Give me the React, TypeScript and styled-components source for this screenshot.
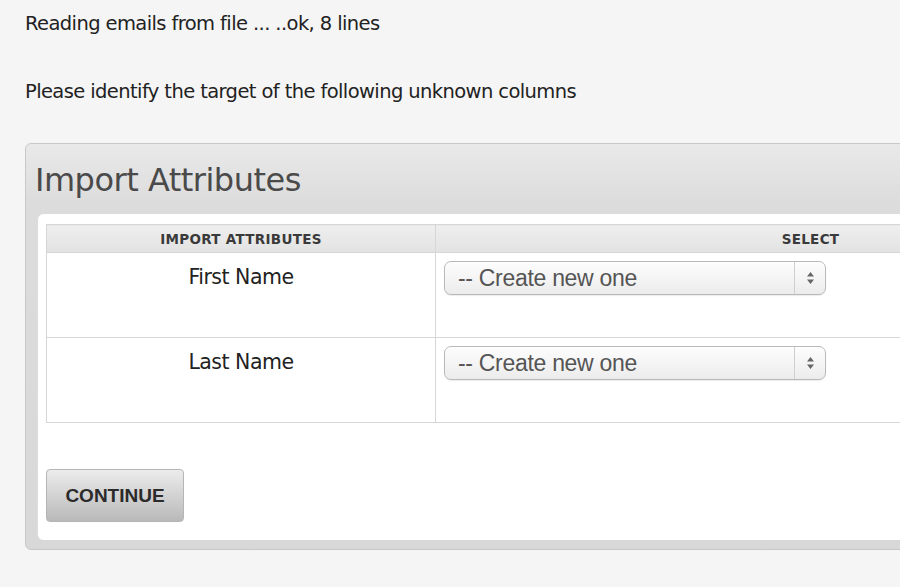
import React from "react";
import styled, { createGlobalStyle } from "styled-components";

const Global = createGlobalStyle`
  html, body { margin: 0; padding: 0; background: #f5f5f5; overflow: hidden; }
  body { font-family: "DejaVu Sans", Verdana, sans-serif; color: #222; width: 900px; height: 587px; }
`;

const Page = styled.div`
  padding: 12px 0 0 25px;
  width: 1300px;
`;
const Line = styled.p<{ gap: number }>`
  margin: 0 0 ${(p) => p.gap}px 0;
  font-size: 19.5px;
  line-height: 24px;
  letter-spacing: -0.6px;
`;
const Panel = styled.div`
  width: 1180px;
  border: 1px solid #c8c8c8;
  border-radius: 6px;
  background: linear-gradient(#e9e9e9, #dcdcdc 60px, #d8d8d8);
  padding: 0 0 9px 11px;
`;
const Title = styled.h1`
  margin: 0 0 0 -2px;
  height: 70px;
  line-height: 72px;
  font-weight: normal;
  font-size: 32px;
  letter-spacing: -0.5px;
  color: #4a4a4a;
`;
const Inner = styled.div`
  background: #fff;
  border-radius: 6px 0 0 6px;
  border-left: 1px solid #ddd;
  padding: 10px 0 18px 8px;
`;
const Table = styled.table`
  border-collapse: collapse;
  width: 1140px;
  border: 1px solid #d6d6d6;
`;
const Th = styled.th<{ w?: number }>`
  width: ${(p) => (p.w ? p.w + "px" : "auto")};
  height: 27px;
  padding: 0;
  font-size: 13.5px;
  letter-spacing: 0.3px;
  color: #3a3a3a;
  background: linear-gradient(#efefef, #e2e2e2);
  border: 1px solid #d6d6d6;
  font-family: "DejaVu Sans", Verdana, sans-serif;
`;
const Td = styled.td<{ center?: boolean }>`
  height: 76px;
  vertical-align: top;
  border: 1px solid #d6d6d6;
  padding: 8px 0 0 ${(p) => (p.center ? 0 : 8)}px;
  text-align: ${(p) => (p.center ? "center" : "left")};
  font-size: 20.5px;
  line-height: 32px;
  color: #222;
  letter-spacing: -0.5px;
`;
const Select = styled.div`
  width: 380px;
  height: 32px;
  border: 1px solid #b9b9b9;
  border-radius: 7px;
  background: linear-gradient(#fdfdfd, #ececec);
  box-shadow: inset 0 1px 1px #fff, 0 1px 1px rgba(0,0,0,0.08);
  display: flex;
  align-items: center;
  font-family: "Liberation Sans", Arial, sans-serif;
  font-size: 23px;
  color: #555;
  letter-spacing: -0.3px;
`;
const SelText = styled.span`
  flex: 1;
  padding-left: 13px;
`;
const Arrows = styled.span`
  width: 30px;
  height: 100%;
  border-left: 1px solid #cfcfcf;
  display: flex;
  align-items: center;
  justify-content: center;
`;
const Button = styled.button`
  margin-top: 46px;
  width: 138px;
  height: 53px;
  border: 1px solid #b5b5b5;
  border-radius: 4px;
  background: linear-gradient(#ececec, #b9b9b9);
  font-family: "Liberation Sans", Arial, sans-serif;
  font-weight: bold;
  font-size: 19px;
  color: #2b2b2b;
  cursor: pointer;
`;

const Sel = () => (
  <Select>
    <SelText>-- Create new one</SelText>
    <Arrows>
      <svg width="9" height="14" viewBox="0 0 9 14">
        <path d="M4.5 1 L8 5.5 L1 5.5 Z M4.5 13 L8 8.5 L1 8.5 Z" fill="#666" />
      </svg>
    </Arrows>
  </Select>
);

export default function App() {
  return (
    <Page>
      <Global />
      <Line gap={44}>Reading emails from file ... ..ok, 8 lines</Line>
      <Line gap={39}>Please identify the target of the following unknown columns</Line>
      <Panel>
        <Title>Import Attributes</Title>
        <Inner>
          <Table>
            <thead>
              <tr>
                <Th w={388}>IMPORT ATTRIBUTES</Th>
                <Th>SELECT</Th>
              </tr>
            </thead>
            <tbody>
              {["First Name", "Last Name"].map((n) => (
                <tr key={n}>
                  <Td center>{n}</Td>
                  <Td><Sel /></Td>
                </tr>
              ))}
            </tbody>
          </Table>
          <Button>CONTINUE</Button>
        </Inner>
      </Panel>
    </Page>
  );
}
